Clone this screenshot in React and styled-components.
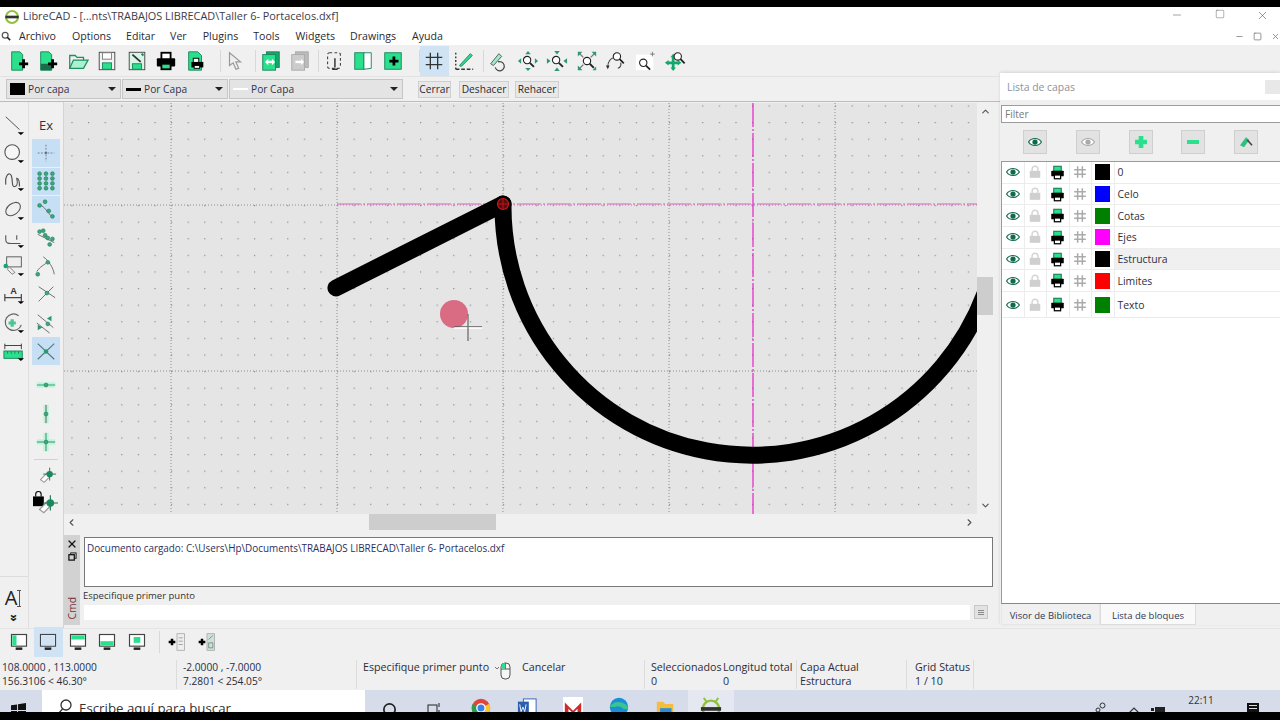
import React from "react";
import styled, { createGlobalStyle } from "styled-components";
import { ChevronLeft, ChevronRight, ChevronUp, ChevronDown, Minus, Square, X } from "lucide-react";

const G = "#2be08c";
const GD = "#17845a";

const Global = createGlobalStyle`
  html, body { margin: 0; padding: 0; background: #f0f0f0; }
  body { font-family: "Open Sans", "Noto Sans", "Liberation Sans", sans-serif; color: #2a2a33; overflow: hidden; }
  * { box-sizing: border-box; }
`;

const Page = styled.div`
  width: 1280px;
  height: 720px;
  display: flex;
  flex-direction: column;
  overflow: hidden;
  background: #f0f0f0;
`;
const BlackBar = styled.div`
  height: ${({ $h }) => $h}px;
  flex: none;
  background: #000;
  position: relative;
  z-index: 2;
`;
const TitleBar = styled.div`
  height: 20px;
  flex: none;
  background: #fff;
  display: flex;
  align-items: center;
  padding-left: 4px;
  gap: 3px;
  font-size: 10.9px;
  color: #3c3c48;
  overflow: hidden;
`;
const TitleText = styled.span`
  margin-top: -4px;
  flex: 1;
`;
const WinButtons = styled.div`
  display: flex;
  margin: -4px -3.5px 0 0;
  color: #444;
`;
const WinButton = styled.div`
  width: 42.5px;
  display: flex;
  justify-content: center;
`;
const MenuBar = styled.div`
  height: 18px;
  flex: none;
  background: #fff;
  display: flex;
  align-items: center;
  font-size: 10.6px;
  padding-left: 1px;
`;
const MenuIcon = styled.span`
  width: 18px;
  display: flex;
`;
const MenuItem = styled.span`
  margin-right: ${({ $gap }) => $gap}px;
`;
const MdiButtons = styled.div`
  margin-left: auto;
  display: flex;
  gap: 9px;
  color: #777;
`;
const Workspace = styled.div`
  height: 583px;
  flex: none;
  display: flex;
`;
const MainCol = styled.div`
  width: 1000px;
  flex: none;
  display: flex;
  flex-direction: column;
`;
const Toolbar = styled.div`
  height: 32px;
  flex: none;
  display: flex;
  align-items: center;
  padding-left: 4px;
  border-bottom: 1px solid #e2e2e2;
  position: relative;
`;
const ToolButton = styled.div`
  width: 29.5px;
  height: 30px;
  flex: none;
  display: flex;
  align-items: center;
  justify-content: center;
  background: ${({ $active }) => ($active ? "#cfe3f5" : "transparent")};
`;
const ToolGap = styled.div`
  width: ${({ $w }) => $w}px;
  flex: none;
  height: 22px;
  border-right: ${({ $line }) => ($line ? "1px solid #d8d8d8" : "none")};
`;
const ComboRow = styled.div`
  height: 25px;
  flex: none;
  display: flex;
  align-items: center;
  padding-left: 6px;
  font-size: 10.2px;
  border-bottom: 1px solid #bcbcbc;
`;
const Combo = styled.div`
  width: ${({ $w }) => $w}px;
  height: 20px;
  flex: none;
  display: flex;
  align-items: center;
  gap: 3px;
  padding: 0 4px 0 3px;
  background: #e4e4e4;
  border: 1px solid #c6c6c6;
  margin-right: 1px;
`;
const Swatch = styled.span`
  width: 15px;
  height: ${({ $h }) => $h}px;
  flex: none;
  background: ${({ $c }) => $c};
`;
const ComboLabel = styled.span`
  flex: 1;
  color: #33334a;
`;
const DropArrow = styled.span`
  width: 0;
  height: 0;
  border-left: 4px solid transparent;
  border-right: 4px solid transparent;
  border-top: 4px solid #222;
`;
const PlainButton = styled.div`
  height: 17px;
  flex: none;
  width: ${({ $w }) => $w}px;
  margin-left: ${({ $ml }) => $ml}px;
  background: #e8e8e8;
  border: 1px solid #cfcfcf;
  display: flex;
  align-items: center;
  justify-content: center;
`;
const MidRow = styled.div`
  flex: 1;
  display: flex;
  min-height: 0;
`;
const LeftTools = styled.div`
  width: 64px;
  flex: none;
  display: flex;
  border-right: 1px solid #d4d4d4;
`;
const ToolColA = styled.div`
  width: 29px;
  flex: none;
  display: flex;
  flex-direction: column;
  align-items: center;
  padding-top: 9px;
  border-right: 1px solid #e0e0e0;
`;
const ToolColB = styled.div`
  flex: 1;
  display: flex;
  flex-direction: column;
  align-items: center;
  padding-top: 9px;
`;
const SideCell = styled.div`
  width: 28px;
  height: 27.3px;
  margin-bottom: 1px;
  flex: none;
  display: flex;
  align-items: center;
  justify-content: center;
  background: ${({ $active }) => ($active ? "#c6dff5" : "transparent")};
  font-size: 13px;
  color: #333;
`;
const SideRule = styled.div`
  width: 24px;
  height: 1px;
  background: #d2d2d2;
  margin: 2px 0;
`;
const SideSpace = styled.div`
  height: ${({ $h }) => $h}px;
  flex: none;
`;
const TextTool = styled.div`
  margin-top: auto;
  width: 100%;
  border-top: 1px solid #dcdcdc;
  height: 52px;
  display: flex;
  flex-direction: column;
  align-items: center;
  padding-top: 10px;
  color: #222;
`;
const TextGlyph = styled.div`
  display: flex;
  align-items: center;
  gap: 0;
  font-size: 20px;
  line-height: 22px;
  margin-right: 2px;
`;
const TextCaret = styled.span`
  width: 4px;
  height: 17px;
  border-top: 1px solid #555;
  border-bottom: 1px solid #555;
  background: linear-gradient(#555, #555) center / 1px 100% no-repeat;
`;
const MoreMark = styled.span`
  font-size: 12px;
  font-weight: 700;
  line-height: 12px;
  margin-top: 3px;
  transform: rotate(90deg);
`;
const CanvasCol = styled.div`
  flex: 1;
  display: flex;
  flex-direction: column;
  padding-right: 7px;
`;
const CanvasFrame = styled.div`
  display: grid;
  grid-template-columns: 913px 16px;
  grid-template-rows: 411px 16px;
  margin-top: 1px;
`;
const Drawing = styled.svg`
  display: block;
  background: #e5e5e6;
`;
const ScrollV = styled.div`
  background: #f0f0f0;
  display: flex;
  flex-direction: column;
  align-items: center;
  justify-content: space-between;
  padding: 3px 0;
  position: relative;
  color: #555;
`;
const ScrollH = styled.div`
  background: #f0f0f0;
  display: flex;
  align-items: center;
  justify-content: space-between;
  padding: 0 2px;
  position: relative;
  color: #555;
`;
const Thumb = styled.div`
  position: absolute;
  background: #cdcdcd;
  ${({ $v }) => ($v ? "left: 0; width: 16px; top: 174px; height: 38px;" : "top: 0; height: 16px; left: 305px; width: 127px;")}
`;
const Corner = styled.div`
  background: #f0f0f0;
`;
const CmdPanel = styled.div`
  height: 90px;
  margin-top: 5px;
  flex: none;
  display: flex;
`;
const CmdStrip = styled.div`
  width: 16px;
  flex: none;
  background: #d2d2d2;
  display: flex;
  flex-direction: column;
  align-items: center;
  padding-top: 3px;
  gap: 2px;
  color: #111;
`;
const CmdLabel = styled.span`
  margin-top: auto;
  padding-top: 5px;
  writing-mode: vertical-rl;
  transform: rotate(180deg);
  font-size: 10.4px;
  color: #7c3038;
`;
const CmdBody = styled.div`
  flex: 1;
  display: flex;
  flex-direction: column;
  padding: 2px 0 0 4px;
`;
const Output = styled.div`
  height: 50px;
  flex: none;
  background: #fff;
  border: 1px solid #777;
  padding: 3px 2px;
  font-size: 9.9px;
  line-height: 14px;
  color: #2c2f5a;
`;
const CmdPrompt = styled.div`
  height: 16px;
  font-size: 9.5px;
  margin: 0 0 2px -1px;
  display: flex;
  align-items: center;
  color: #333;
`;
const CmdInputRow = styled.div`
  display: flex;
  gap: 4px;
  align-items: flex-start;
`;
const CmdInput = styled.div`
  width: 886px;
  height: 15px;
  background: #fff;
`;
const CmdHistory = styled.div`
  width: 14px;
  height: 14px;
  background: #e2e2e2;
  border: 1px solid #c8c8c8;
  display: flex;
  flex-direction: column;
  justify-content: center;
  gap: 1px;
  padding: 0 3px;
`;
const CmdHistoryBar = styled.span`
  height: 1px;
  background: #8a8a8a;
`;
const DockCol = styled.div`
  flex: 1;
  padding-top: 28px;
  min-width: 0;
`;
const Dock = styled.div`
  height: 552px;
  display: flex;
  flex-direction: column;
  box-shadow: 0 -1px 3px rgba(0, 0, 0, 0.12);
`;
const DockHeader = styled.div`
  height: 27px;
  flex: none;
  background: #fff;
  display: flex;
  align-items: center;
  justify-content: space-between;
  padding-left: 7px;
  font-size: 10.4px;
  color: #8b939b;
`;
const DockClose = styled.div`
  width: 15px;
  height: 14px;
  background: #e8e8e8;
`;
const FilterBox = styled.div`
  height: 18px;
  flex: none;
  margin: 5px 0 0 1px;
  background: #fff;
  border: 1px solid #9c9c9c;
  border-right: none;
  padding-left: 3px;
  font-size: 10px;
  line-height: 16px;
  color: #777;
`;
const LayerTools = styled.div`
  height: 24px;
  flex: none;
  margin-top: 7px;
  padding-left: 23px;
  display: flex;
  gap: 28.8px;
`;
const LayerTool = styled.div`
  width: 24px;
  height: 24px;
  background: #e2e2e2;
  border: 1px solid #cfcfcf;
  display: flex;
  align-items: center;
  justify-content: center;
`;
const LayerTable = styled.div`
  flex: 1;
  margin: 7px 0 0 1px;
  background: #fff;
  border: 1px solid #9a9a9a;
  border-right: none;
  border-bottom-color: #888;
`;
const LayerRow = styled.div`
  display: grid;
  grid-template-columns: repeat(5, 22.5px) 1fr;
  height: ${({ $tall }) => ($tall ? 26 : 21.7)}px;
  border-bottom: 1px solid #ececec;
`;
const LayerCell = styled.div`
  display: flex;
  align-items: center;
  justify-content: center;
  border-right: 1px solid #ececec;
`;
const LayerName = styled.div`
  display: flex;
  align-items: center;
  padding-left: 3px;
  font-size: 10.4px;
  color: #2e3040;
  background: ${({ $selected }) => ($selected ? "#f0f0f0" : "transparent")};
`;
const LayerColor = styled.span`
  width: 15px;
  height: 16px;
  background: ${({ $c }) => $c};
`;
const DockTabs = styled.div`
  height: 21px;
  flex: none;
  display: flex;
  padding-left: 1px;
  font-size: 9.5px;
`;
const DockTab = styled.div`
  height: 21px;
  width: ${({ $w }) => $w}px;
  display: flex;
  align-items: center;
  justify-content: center;
  padding-top: 2px;
  color: #2e3a55;
  background: ${({ $active }) => ($active ? "#f9f9f9" : "#f0f0f0")};
  border: 1px solid ${({ $active }) => ($active ? "#dcdcdc" : "#e6e6e6")};
  border-top: none;
`;
const BottomBar = styled.div`
  height: 27px;
  flex: none;
  display: flex;
  align-items: center;
  padding-left: 4px;
  border-top: 1px solid #e4e4e4;
`;
const StatusBar = styled.div`
  height: 35px;
  flex: none;
  display: flex;
  align-items: center;
  font-size: 10.7px;
  line-height: 14px;
  color: #2c2c38;
`;
const StatusCell = styled.div`
  width: ${({ $w }) => $w}px;
  flex: none;
  height: 29px;
  margin-top: 3px;
  padding-left: ${({ $pl }) => $pl}px;
  border-right: ${({ $line }) => ($line ? "1px solid #dcdcdc" : "none")};
  white-space: nowrap;
`;
const CoordCell = styled(StatusCell)`
  font-size: 10.2px;
`;
const PromptCell = styled(StatusCell)`
  display: flex;
  align-items: flex-start;
`;
const CancelText = styled.span`
  margin-left: 5px;
`;
const StatusValue = styled.div`
  color: #24304e;
`;
const Taskbar = styled.div`
  height: 22px;
  flex: none;
  background: #d7dcea;
  display: flex;
  overflow: hidden;
  position: relative;
`;
const StartCell = styled.div`
  width: 42px;
  flex: none;
  padding: 11px 0 0 11px;
`;
const SearchBox = styled.div`
  width: 323px;
  height: 30px;
  flex: none;
  background: #fff;
  display: flex;
  align-items: flex-start;
  padding: 9px 0 0 15px;
  gap: 6px;
  font-size: 13.3px;
  color: #333;
`;
const TrayIcon = styled.div`
  width: ${({ $w }) => $w || 46}px;
  flex: none;
  display: flex;
  justify-content: center;
  padding-top: ${({ $pt }) => $pt || 8}px;
  background: ${({ $active }) => ($active ? "#e6e8f1" : "transparent")};
`;
const TrayRight = styled.div`
  margin-left: auto;
  display: flex;
  align-items: flex-start;
  padding-right: 15px;
`;
const Clock = styled.div`
  width: 50px;
  margin-right: 15px;
  text-align: center;
  font-size: 10px;
  padding-top: 3px;
  color: #333;
`;
const SmallTray = styled.div`
  width: ${({ $w }) => $w}px;
  display: flex;
  justify-content: center;
  padding-top: ${({ $pt }) => $pt || 12}px;
`;

const Ic = ({ s = 22, children }) => (
  <svg width={s} height={s} viewBox="0 0 24 24" fill="none">
    {children}
  </svg>
);

const Plus = ({ x = 17, y = 15, r = 5 }) => (
  <path d={`M${x - r} ${y}H${x + r}M${x} ${y - r}V${y + r}`} stroke="#000" strokeWidth="3" />
);
const Lens = ({ x = 13, y = 11, r = 4 }) => (
  <g stroke="#222" strokeWidth="1.2">
    <circle cx={x} cy={y} r={r} fill="#fff" />
    <path d={`M${x + r - 1} ${y + r - 1}l4.5 4.5`} strokeWidth="2" />
  </g>
);
const Tri = ({ d }) => <path d={d} fill="#2a9a6c" />;

const icons = {
  newDoc: (
    <Ic>
      <path d="M4 2h9l3 3v17H4z" fill={G} stroke={GD} />
      <Plus />
    </Ic>
  ),
  newTpl: (
    <Ic>
      <path d="M4 2h9l3 3v17H4z" fill={G} stroke={GD} />
      <rect x="4" y="15" width="12" height="7" fill="#1a6b48" />
      <Plus />
    </Ic>
  ),
  open: (
    <Ic>
      <path d="M3 20V6h6l2 2h7v3" stroke="#1f8e62" strokeWidth="1.4" />
      <path d="M3 20l4-9h16l-5 9z" fill="#a9f1cf" stroke="#1f8e62" strokeWidth="1.4" />
    </Ic>
  ),
  save: (
    <Ic>
      <rect x="3.5" y="2.5" width="17" height="19" fill="#f4f4f4" stroke="#444" />
      <rect x="7" y="3" width="10" height="7" fill="#fff" stroke="#777" />
      <rect x="7" y="14" width="10" height="7" fill={G} stroke={GD} />
    </Ic>
  ),
  saveAs: (
    <Ic>
      <rect x="3.5" y="2.5" width="17" height="19" fill="#d8f5e6" stroke="#444" />
      <rect x="7" y="15" width="10" height="6" fill={G} stroke={GD} />
      <path d="M7 5l9 8" stroke="#333" strokeWidth="2" />
      <path d="M17 4l2 2" stroke={GD} strokeWidth="2" />
    </Ic>
  ),
  print: (
    <Ic>
      <rect x="7" y="3" width="10" height="8" fill="#fff" stroke="#000" strokeWidth="2" />
      <rect x="2" y="9" width="20" height="9" rx="1" fill="#000" />
      <rect x="7" y="15" width="10" height="6" fill={G} stroke="#000" strokeWidth="2" />
    </Ic>
  ),
  preview: (
    <Ic>
      <path d="M4 2h10l4 4v16H4z" fill={G} stroke={GD} />
      <rect x="9" y="9" width="6" height="5" fill="#fff" stroke="#000" />
      <rect x="7" y="13" width="13" height="6" fill="#000" />
      <rect x="10" y="17" width="6" height="3" fill="#fff" stroke="#000" />
    </Ic>
  ),
  cursor: (
    <Ic>
      <path d="M6 3l12 10h-5l3 7-3 1-3-7-4 3z" fill="#eee" stroke="#999" strokeWidth="1.3" />
    </Ic>
  ),
  swap: (
    <Ic>
      <rect x="7" y="2" width="14" height="17" fill="#14a86c" stroke={GD} />
      <rect x="3" y="5" width="14" height="17" fill={G} stroke={GD} />
      <path d="M7 13h8" stroke="#fff" strokeWidth="2.6" />
      <path d="M9 9.5L5.5 13 9 16.5zM13 9.5l3.5 3.5-3.5 3.5z" fill="#fff" />
    </Ic>
  ),
  swapOff: (
    <Ic>
      <rect x="7" y="2" width="14" height="17" fill="#bbb" stroke="#aaa" />
      <rect x="3" y="5" width="14" height="17" fill="#ccc" stroke="#aaa" />
      <path d="M7 13h8" stroke="#fff" strokeWidth="2.6" />
      <path d="M13 9.5l3.5 3.5-3.5 3.5z" fill="#fff" />
    </Ic>
  ),
  dashed: (
    <Ic>
      <rect x="5" y="3" width="14" height="17" rx="2" stroke="#444" strokeWidth="1.2" strokeDasharray="3 2.5" />
      <path d="M13 9v10M10 21h6" stroke="#333" strokeWidth="1.6" />
    </Ic>
  ),
  panes: (
    <Ic>
      <rect x="3" y="3" width="10" height="18" fill={G} stroke={GD} />
      <path d="M13 3h8v17l-8 1z" fill="#fff" stroke={GD} />
    </Ic>
  ),
  panesAdd: (
    <Ic>
      <rect x="3" y="3" width="18" height="18" fill={G} stroke={GD} />
      <Plus x={13} y={12} r={5} />
    </Ic>
  ),
  grid: (
    <Ic>
      <path d="M8 3v18M16 3v18M3 8h18M3 16h18" stroke="#333" strokeWidth="1.4" />
    </Ic>
  ),
  draft: (
    <Ic>
      <path d="M3 3v18" stroke="#333" strokeDasharray="2 2" strokeWidth="1.5" />
      <path d="M3 21h19" stroke="#333" strokeDasharray="4 2" strokeWidth="1.5" />
      <path d="M7 17L19 4l2 2L9 18z" fill={G} stroke={GD} />
    </Ic>
  ),
  redraw: (
    <Ic>
      <path d="M4 15L13 4l3 3-9 10z" fill="#9fe9c6" stroke="#555" />
      <path d="M12 13a5 5 0 1 1-3 6" stroke="#444" strokeWidth="1.3" />
    </Ic>
  ),
  zoomIn: (
    <Ic>
      <Tri d="M12 1l3 3.5H9zM12 23l-3-3.5h6zM1 12l3.5-3v6zM23 12l-3.5 3v-6z" />
      <Lens x={11} y={11} />
    </Ic>
  ),
  zoomOut: (
    <Ic>
      <Tri d="M12 5L9 1h6zM12 19l3 4H9zM5 12l-4 3V9zM19 12l4-3v6z" />
      <Lens x={11} y={11} />
    </Ic>
  ),
  zoomAuto: (
    <Ic>
      <path d="M3 3l5 5M21 3l-5 5M3 21l5-5" stroke="#777" strokeWidth="1.4" />
      <path d="M2 2h5L2 7zM22 2h-5l5 5zM2 22h5l-5-5zM22 22h-4l4-4z" fill="#2a9a6c" />
      <Lens x={12} y={12} />
    </Ic>
  ),
  zoomPrev: (
    <Ic>
      <path d="M3 19c0-6 3-10 8-11" stroke="#444" strokeWidth="1.2" />
      <path d="M1 17l2 4 2-4z" fill="#333" />
      <path d="M14 20c3-1 4-4 3-6" stroke="#444" strokeWidth="1.2" />
      <Lens x={13} y={7} />
    </Ic>
  ),
  zoomWin: (
    <Ic>
      <rect x="1" y="5" width="19" height="17" fill="#fff" />
      <Lens x={9} y={14} />
      <path d="M19 2v5M16.5 4.5h5" stroke="#777" />
    </Ic>
  ),
  zoomPan: (
    <Ic>
      <path d="M10 4l3 4H7zM10 23l-3-4h6zM1 14l4-3v6zM19 14l-4 3v-6z" fill="#14a86c" />
      <path d="M10 7v13M4 14h12" stroke="#14a86c" strokeWidth="3" />
      <Lens x={15} y={7} />
    </Ic>
  ),
};

const topTools = [
  ["newDoc"], ["newTpl"], ["open"], ["save"], ["saveAs"], ["print"], ["preview"],
  [null, 10], ["cursor"], [null, 6], ["swap"], ["swapOff"], [null, 4], ["dashed"], ["panes"], ["panesAdd"],
  [null, 12], ["grid", 0, true], ["draft"], [null, 5], ["redraw"], ["zoomIn"], ["zoomOut"], ["zoomAuto"], ["zoomPrev"], ["zoomWin"], ["zoomPan"],
];

const More = () => <path d="M16 20h7l-3.5 3z" fill="#000" />;
const sideA = [
  <Ic key="a"><path d="M3 3l15 14" stroke="#444" /><More /></Ic>,
  <Ic key="b"><circle cx="10" cy="11" r="8" stroke="#555" strokeWidth="1.2" fill="#f6f6f6" /><More /></Ic>,
  <Ic key="c"><path d="M3 16C2 5 7 2 9 6c2 5 0 13 4 12 4-1 2-9 2-9 2 0 3 3 3 9" stroke="#555" strokeWidth="1.3" /><More /></Ic>,
  <Ic key="d"><ellipse cx="11" cy="11" rx="9" ry="6" transform="rotate(-38 11 11)" stroke="#555" strokeWidth="1.2" /><More /></Ic>,
  <Ic key="e"><path d="M3 9v5c0 4 3 4 6 4h10M15 9v5" stroke="#555" strokeWidth="1.2" /><More /></Ic>,
  <Ic key="f"><rect x="4" y="2" width="16" height="11" fill="#eee" stroke="#555" /><circle cx="3" cy="12" r="2.5" fill="#14a86c" /><path d="M6 12l7 7-3 2-5-5z" fill="#eee" stroke="#777" /><More /></Ic>,
  <Ic key="g"><path d="M2 12v8M20 12v8M2 16h18" stroke="#444" strokeWidth="1.3" /><text x="8" y="12" fontSize="10" fontWeight="700" fill="#333" fontFamily="Liberation Sans">A</text><More /></Ic>,
  <Ic key="h"><path d="M17 4a9 9 0 1 0 3 10" stroke="#666" strokeWidth="1.3" /><path d="M10 8v8M6 12h8" stroke="#4cc595" strokeWidth="3.5" /><More /></Ic>,
  <Ic key="i"><path d="M2 4v6M20 4v6M2 6h18" stroke="#333" /><rect x="1" y="12" width="20" height="8" fill={G} stroke={GD} /><path d="M5 12v3M9 12v3M13 12v3M17 12v3" stroke={GD} /><More /></Ic>,
];

const Node = ({ x, y, r = 2.1 }) => <circle cx={x} cy={y} r={r} fill="#3ca67c" stroke="#1b7a56" strokeWidth=".6" />;
const Snap = ({ lines, nodes }) => (
  <Ic>
    {lines && <path d={lines} stroke="#666" strokeWidth="1" />}
    {nodes.map(([x, y], i) => <Node key={i} x={x} y={y} />)}
  </Ic>
);
const matrix = [];
for (let a = 5; a <= 19; a += 7) for (let b = 4; b <= 20; b += 5.3) matrix.push([a, b]);

const EraseSnap = ({ lock }) => (
  <Ic s={lock ? 26 : 22}>
    {lock && <rect x="0" y="5" width="10" height="9" fill="#000" />}
    {lock && <path d="M2.5 5V3a2.5 2.5 0 0 1 5 0v2" stroke="#000" />}
    <path d="M6 17l7-7 4 3-7 7z" fill="#fff" stroke="#999" strokeWidth="1.2" />
    <path d="M16 4v14M9 11h14" stroke="#14704c" strokeWidth="1" />
    <circle cx="16" cy="11" r="3.5" fill="#1a8a5e" />
  </Ic>
);

const sideB = [
  { text: "Ex" },
  { active: true, el: <Ic><path d="M12 3v18M3 12h18" stroke="#6a7a88" strokeDasharray="2 1.5" /><circle cx="12" cy="12" r="1" fill="#555" /></Ic> },
  { active: true, el: <Snap nodes={matrix} /> },
  { active: true, el: <Snap lines="M5 7C11 7 13 16 19 19" nodes={[[5, 7], [11, 3], [15, 13], [19, 19]]} /> },
  { el: <Snap lines="M3 8l18 9" nodes={[[5, 5], [9, 4], [11, 9], [14, 12], [19, 13], [16, 19]]} /> },
  { el: <Snap lines="M2 18C6 12 10 11 12 9M9 2C15 6 20 14 21 21" nodes={[[14, 8], [3, 21]]} /> },
  { el: <Snap lines="M4 4l18 12M4 20L20 4" nodes={[[13, 11]]} /> },
  { el: <Ic><path d="M3 3l17 14M2 12l14 11" stroke="#666" strokeWidth="1" /><Tri d="M18 4l-5 3 5 3zM3 14l5 3-5 3z" /><Node x={14} y={13} /></Ic> },
  { active: true, el: <Ic><path d="M3 4l18 17M21 4L3 21" stroke="#4e7c78" strokeWidth="1.2" /><circle cx="12" cy="12.5" r="2.5" fill="#2a9a6c" /></Ic> },
];

const Eye = ({ c = "#0f6b4a" }) => (
  <Ic s={14}>
    <path d="M1 12c5-8 17-8 22 0-5 8-17 8-22 0z" fill="#fff" stroke={c} strokeWidth="2" />
    <circle cx="12" cy="12" r="4.5" fill={c} />
  </Ic>
);
const Lock = () => (
  <Ic s={14}>
    <rect x="3" y="10" width="18" height="12" fill="#cfcfcf" />
    <path d="M7 11V7a5 5 0 0 1 10 0v4" stroke="#d5d5d5" strokeWidth="2.6" />
  </Ic>
);
const Printer = () => (
  <Ic s={15}>
    <rect x="6" y="2" width="12" height="8" fill={G} stroke="#14704c" strokeWidth="1.6" />
    <rect x="2" y="9" width="20" height="9" rx="1" fill="#000" />
    <rect x="7" y="16" width="10" height="6" fill="#fff" stroke="#000" strokeWidth="2" />
  </Ic>
);
const Hash = () => (
  <Ic s={14}>
    <path d="M8 2v20M16 2v20M2 8h20M2 16h20" stroke="#aaa" strokeWidth="2.6" />
  </Ic>
);

const layers = [
  ["0", "#000"], ["Celo", "#0000ff"], ["Cotas", "#008000"], ["Ejes", "#ff00ff"],
  ["Estructura", "#000", true], ["Limites", "#ff0000"], ["Texto", "#008000", false, true],
];

const Monitor = ({ zone }) => (
  <Ic s={20}>
    <rect x="3" y="3" width="18" height="14" fill="#fff" stroke="#444" strokeWidth="1.4" />
    {zone}
    <path d="M8 20h8" stroke="#222" strokeWidth="3" />
  </Ic>
);
const bottomTools = [
  { el: <Monitor zone={<rect x="4" y="4" width="5" height="12" fill={G} />} /> },
  { el: <Monitor zone={<rect x="4" y="4" width="16" height="12" fill="#cfe3f5" />} />, active: true },
  { el: <Monitor zone={<rect x="4" y="4" width="16" height="5" fill={G} />} /> },
  { el: <Monitor zone={<rect x="4" y="11" width="16" height="5" fill={G} />} /> },
  { el: <Monitor zone={<rect x="8" y="6" width="8" height="7" fill={G} />} /> },
];

const ArcDrawing = () => {
  const xs = [171, 337, 503, 669, 835];
  const ys = [205, 371];
  return (
    <Drawing width="913" height="411" viewBox="64 103 913 411">
      <defs>
        <pattern id="dots" x="171" y="205" width="16.6" height="16.6" patternUnits="userSpaceOnUse">
          <rect width="1.2" height="1.2" fill="#8b8b8b" />
        </pattern>
      </defs>
      <rect x="64" y="103" width="913" height="411" fill="url(#dots)" />
      {xs.map((x) => <path key={x} d={`M${x} 103V514`} stroke="#8f8f8f" strokeDasharray="1 2" />)}
      {ys.map((y) => <path key={y} d={`M64 ${y}H977`} stroke="#8f8f8f" strokeDasharray="1 2" />)}
      <path d="M337 204H977" stroke="#d860c0" strokeWidth="1.2" strokeDasharray="24 2 2 2" />
      <path d="M753 103V514" stroke="#ea1ec8" strokeWidth="1.2" strokeDasharray="24 2 2 2" />
      <g stroke="#000" strokeWidth="17" strokeLinecap="round" fill="none">
        <path d="M336 288L503 204" />
        <path d="M503 204A249 249 0 0 0 985 294" />
      </g>
      <circle cx="503" cy="204" r="5.5" fill="#5a0a12" stroke="#d01818" strokeWidth="1.2" />
      <path d="M497 204h12M503 198v12" stroke="#d01818" strokeWidth=".8" />
      <circle cx="454" cy="314" r="14" fill="#d96b82" />
      <path d="M454 328H482" stroke="#fff" strokeWidth="1.6" />
      <path d="M454 326.6H482" stroke="#555" strokeWidth=".8" />
      <path d="M468 314V341" stroke="#777" strokeWidth="1.4" />
    </Drawing>
  );
};

const App = () => (
  <Page>
    <Global />
    <BlackBar $h={7} />
    <TitleBar>
      <svg width="16" height="16" viewBox="0 0 24 24" fill="none">
        <circle cx="12" cy="12" r="9" stroke="#8fc23a" strokeWidth="3" />
        <path d="M2 12h20" stroke="#333" strokeWidth="4" />
      </svg>
      <TitleText>LibreCAD - [...nts\TRABAJOS LIBRECAD\Taller 6- Portacelos.dxf]</TitleText>
      <WinButtons>
        <WinButton><Minus size={12} strokeWidth={1} /></WinButton>
        <WinButton><Square size={10} strokeWidth={1} /></WinButton>
        <WinButton><X size={13} strokeWidth={1} /></WinButton>
      </WinButtons>
    </TitleBar>
    <MenuBar>
      <MenuIcon>
        <svg width="10" height="10" viewBox="0 0 24 24" fill="none">
          <circle cx="10" cy="10" r="7" stroke="#555" strokeWidth="3" />
          <path d="M15 15l7 7" stroke="#222" strokeWidth="4" />
        </svg>
      </MenuIcon>
      <MenuItem $gap={16}>Archivo</MenuItem>
      <MenuItem $gap={15}>Options</MenuItem>
      <MenuItem $gap={15}>Editar</MenuItem>
      <MenuItem $gap={16}>Ver</MenuItem>
      <MenuItem $gap={15}>Plugins</MenuItem>
      <MenuItem $gap={16}>Tools</MenuItem>
      <MenuItem $gap={15}>Widgets</MenuItem>
      <MenuItem $gap={16}>Drawings</MenuItem>
      <MenuItem $gap={0}>Ayuda</MenuItem>
      <MdiButtons>
        <Minus size={9} />
        <Square size={9} />
        <X size={9} />
      </MdiButtons>
    </MenuBar>
    <Workspace>
      <MainCol>
        <Toolbar>
          {topTools.map(([name, w, active], i) =>
            name ? (
              <ToolButton key={i} $active={active}>{icons[name]}</ToolButton>
            ) : (
              <ToolGap key={i} $w={w} $line />
            )
          )}
        </Toolbar>
        <ComboRow>
          <Combo $w={115}>
            <Swatch $c="#000" $h={12} />
            <ComboLabel>Por capa</ComboLabel>
            <DropArrow />
          </Combo>
          <Combo $w={106}>
            <Swatch $c="#000" $h={3} />
            <ComboLabel>Por Capa</ComboLabel>
            <DropArrow />
          </Combo>
          <Combo $w={174}>
            <Swatch $c="#fff" $h={2} />
            <ComboLabel>Por Capa</ComboLabel>
            <DropArrow />
          </Combo>
          <PlainButton $w={33} $ml={14}>Cerrar</PlainButton>
          <PlainButton $w={50} $ml={8}>Deshacer</PlainButton>
          <PlainButton $w={44} $ml={6}>Rehacer</PlainButton>
        </ComboRow>
        <MidRow>
          <LeftTools>
            <ToolColA>
              {sideA.map((el, i) => <SideCell key={i}>{el}</SideCell>)}
              <TextTool>
                <TextGlyph>
                  A
                  <TextCaret />
                </TextGlyph>
                <MoreMark>»</MoreMark>
              </TextTool>
            </ToolColA>
            <ToolColB>
              {sideB.map((b, i) => (
                <SideCell key={i} $active={b.active}>{b.text || b.el}</SideCell>
              ))}
              <SideSpace $h={6} />
              <SideCell><Ic><rect x="2" y="9" width="20" height="6" fill="#bdf5da" /><path d="M2 12h20" stroke="#2a9a6c" /><Node x={12} y={12} /></Ic></SideCell>
              <SideCell><Ic><rect x="9" y="2" width="6" height="20" fill="#bdf5da" /><path d="M12 2v20" stroke="#555" /><Node x={12} y={12} /></Ic></SideCell>
              <SideCell><Ic><rect x="2" y="9" width="20" height="6" fill="#bdf5da" /><rect x="9" y="2" width="6" height="20" fill="#bdf5da" /><path d="M2 12h20M12 2v20" stroke="#2a8a60" /><Node x={12} y={12} /></Ic></SideCell>
              <SideRule />
              <SideCell><EraseSnap /></SideCell>
              <SideCell><EraseSnap lock /></SideCell>
            </ToolColB>
          </LeftTools>
          <CanvasCol>
            <CanvasFrame>
              <ArcDrawing />
              <ScrollV>
                <ChevronUp size={11} strokeWidth={2.5} />
                <Thumb $v />
                <ChevronDown size={11} strokeWidth={2.5} />
              </ScrollV>
              <ScrollH>
                <ChevronLeft size={11} strokeWidth={2.5} />
                <Thumb />
                <ChevronRight size={11} strokeWidth={2.5} />
              </ScrollH>
              <Corner />
            </CanvasFrame>
            <CmdPanel>
              <CmdStrip>
                <X size={12} strokeWidth={2.4} />
                <svg width="9" height="9" viewBox="0 0 10 10" fill="none" stroke="#111">
                  <rect x="3" y="1" width="6" height="6" />
                  <rect x="1" y="3" width="6" height="6" fill="#d2d2d2" strokeWidth="1.4" />
                </svg>
                <CmdLabel>Cmd</CmdLabel>
              </CmdStrip>
              <CmdBody>
                <Output>Documento cargado: C:\Users\Hp\Documents\TRABAJOS LIBRECAD\Taller 6- Portacelos.dxf</Output>
                <CmdPrompt>Especifique primer punto</CmdPrompt>
                <CmdInputRow>
                  <CmdInput />
                  <CmdHistory>
                    <CmdHistoryBar />
                    <CmdHistoryBar />
                    <CmdHistoryBar />
                  </CmdHistory>
                </CmdInputRow>
              </CmdBody>
            </CmdPanel>
          </CanvasCol>
        </MidRow>
      </MainCol>
      <DockCol>
        <Dock>
          <DockHeader>
            Lista de capas
            <DockClose />
          </DockHeader>
          <FilterBox>Filter</FilterBox>
          <LayerTools>
            <LayerTool><Eye /></LayerTool>
            <LayerTool><Eye c="#aaa" /></LayerTool>
            <LayerTool>
              <Ic s={16}><path d="M12 3v18M3 12h18" stroke={G} strokeWidth="7" /></Ic>
            </LayerTool>
            <LayerTool>
              <Ic s={16}><path d="M3 12h18" stroke={G} strokeWidth="6" /></Ic>
            </LayerTool>
            <LayerTool>
              <Ic s={16}><path d="M3 17L12 5l5 4-8 11z" fill="#2fbf80" /><path d="M14 9l7 8" stroke="#444" strokeWidth="2.4" /></Ic>
            </LayerTool>
          </LayerTools>
          <LayerTable>
            {layers.map(([name, color, selected, tall]) => (
              <LayerRow key={name} $tall={tall}>
                <LayerCell><Eye /></LayerCell>
                <LayerCell><Lock /></LayerCell>
                <LayerCell><Printer /></LayerCell>
                <LayerCell><Hash /></LayerCell>
                <LayerCell><LayerColor $c={color} /></LayerCell>
                <LayerName $selected={selected}>{name}</LayerName>
              </LayerRow>
            ))}
          </LayerTable>
          <DockTabs>
            <DockTab $w={99}>Visor de Biblioteca</DockTab>
            <DockTab $w={96} $active>Lista de bloques</DockTab>
          </DockTabs>
        </Dock>
      </DockCol>
    </Workspace>
    <BottomBar>
      {bottomTools.map((t, i) => (
        <ToolButton key={i} $active={t.active}>{t.el}</ToolButton>
      ))}
      <ToolGap $w={8} $line />
      <ToolGap $w={3} />
      <ToolButton>
        <Ic s={20}><rect x="12" y="2" width="9" height="20" fill="#eee" stroke="#aaa" /><path d="M14 7h5M14 11h5M14 15h5" stroke="#999" /><Plus x={6} y={12} r={4} /></Ic>
      </ToolButton>
      <ToolButton>
        <Ic s={20}><rect x="12" y="2" width="9" height="20" fill="#cfe0d8" stroke="#aaa" /><path d="M14 9l5-5M14 13h5v6h-5z" stroke="#6a8a7c" /><Plus x={6} y={12} r={4} /></Ic>
      </ToolButton>
    </BottomBar>
    <StatusBar>
      <CoordCell $w={177} $pl={2} $line>
        <StatusValue>108.0000 , 113.0000</StatusValue>
        <div>156.3106 &lt; 46.30°</div>
      </CoordCell>
      <CoordCell $w={180} $pl={6} $line>
        <StatusValue>-2.0000 , -7.0000</StatusValue>
        <div>7.2801 &lt; 254.05°</div>
      </CoordCell>
      <PromptCell $w={288} $pl={6} $line>
        Especifique primer punto
        <svg width="28" height="22" viewBox="0 0 28 22" fill="none" stroke="#555">
          <rect x="12" y="3" width="9" height="16" rx="4" fill="#f6f6f6" />
          <path d="M12 9h9M16.5 3v6" />
          <path d="M12.5 8.5V5a3 3 0 0 1 4-1.5V8.5z" fill={G} stroke="none" />
          <path d="M6 7l2 2 2-2" strokeWidth=".8" />
        </svg>
        <CancelText>Cancelar</CancelText>
      </PromptCell>
      <StatusCell $w={78} $pl={6}>
        Seleccionados
        <StatusValue>0</StatusValue>
      </StatusCell>
      <StatusCell $w={74} $line>
        Longitud total
        <StatusValue>0</StatusValue>
      </StatusCell>
      <StatusCell $w={110} $pl={3} $line>
        Capa Actual
        <StatusValue>Estructura</StatusValue>
      </StatusCell>
      <StatusCell $w={67} $pl={8} $line>
        Grid Status
        <StatusValue>1 / 10</StatusValue>
      </StatusCell>
    </StatusBar>
    <Taskbar>
      <StartCell>
        <svg width="15" height="15" viewBox="0 0 16 16" fill="#111">
          <path d="M0 2.5l6.5-1v6H0zM7.5 1.3L16 0v7.5H7.5zM0 8.5h6.5v6l-6.5-1zM7.5 8.5H16V16l-8.5-1.3z" />
        </svg>
      </StartCell>
      <SearchBox>
        <svg width="16" height="18" viewBox="0 0 16 18" fill="none" stroke="#333" strokeWidth="1.3">
          <circle cx="9" cy="6" r="5" />
          <path d="M5.5 10L1 15" />
        </svg>
        Escribe aquí para buscar
      </SearchBox>
      <TrayIcon $w={48} $pt={12}>
        <svg width="15" height="15" viewBox="0 0 16 16" fill="none"><circle cx="8" cy="8" r="6" stroke="#222" strokeWidth="1.8" /></svg>
      </TrayIcon>
      <TrayIcon $w={42} $pt={12}>
        <svg width="16" height="16" viewBox="0 0 16 16" fill="none" stroke="#222"><rect x="2" y="3" width="9" height="10" /><path d="M13 1v4M13 8v4" /></svg>
      </TrayIcon>
      <TrayIcon $w={3} />
      <TrayIcon>
        <svg width="20" height="20" viewBox="0 0 24 24"><circle cx="12" cy="12" r="11" fill="#e0463a" /><path d="M12 12L22 7a11 11 0 0 1-6 15z" fill="#f8c52c" /><path d="M12 12L2 7a11 11 0 0 0 10 16z" fill="#2f9e4f" /><circle cx="12" cy="12" r="5" fill="#3f7fe8" stroke="#fff" strokeWidth="1.6" /></svg>
      </TrayIcon>
      <TrayIcon>
        <svg width="20" height="20" viewBox="0 0 22 22"><rect x="7" y="1" width="14" height="20" fill="#fff" stroke="#2b5fb0" /><rect x="1" y="4" width="12" height="14" fill="#2b5fb0" /><path d="M3 7l1.5 8 2-5 2 5L10 7" stroke="#fff" fill="none" /></svg>
      </TrayIcon>
      <TrayIcon $pt={7}>
        <svg width="22" height="20" viewBox="0 0 24 22"><rect x="1" y="0" width="22" height="22" fill="#fff" /><path d="M3 6l9 9 9-9v14h-4v-7l-5 5-5-5v7H3z" fill="#cf2a2a" /></svg>
      </TrayIcon>
      <TrayIcon $pt={7}>
        <svg width="20" height="20" viewBox="0 0 24 24"><circle cx="12" cy="12" r="11" fill="#1a8fd8" /><path d="M1 12C5 4 17 4 23 12c0 3-3 3-6 2-2-2-6-4-10-2z" fill="#38c58e" /></svg>
      </TrayIcon>
      <TrayIcon $pt={10}>
        <svg width="20" height="18" viewBox="0 0 24 22"><path d="M2 2h8l2 3h10v17H2z" fill="#f4bd3e" /><rect x="6" y="10" width="14" height="10" fill="#2b8fd8" /></svg>
      </TrayIcon>
      <TrayIcon $active $pt={7}>
        <svg width="24" height="22" viewBox="0 0 26 24" fill="none"><circle cx="13" cy="13" r="9" stroke="#8fc23a" strokeWidth="2.6" /><path d="M2 13h22" stroke="#333" strokeWidth="4" /><path d="M5 1l3 4M21 1l-3 4" stroke="#8fc23a" strokeWidth="2" /></svg>
      </TrayIcon>
      <TrayRight>
        <SmallTray $w={54}>
          <svg width="12" height="12" viewBox="0 0 12 12" fill="none" stroke="#333"><circle cx="7.5" cy="3.5" r="2.5" /><circle cx="3" cy="8" r="2" /></svg>
        </SmallTray>
        <SmallTray $w={12} $pt={16}>
          <svg width="12" height="8" viewBox="0 0 12 8" fill="none" stroke="#333" strokeWidth="1.2"><path d="M1 7l5-5 5 5" /></svg>
        </SmallTray>
        <SmallTray $w={36} $pt={15}>
          <svg width="14" height="10" viewBox="0 0 14 10" fill="#222"><rect x="4" y="2" width="10" height="8" /><path d="M0 3h3v3H0z" /></svg>
        </SmallTray>
        <Clock>22:11</Clock>
        <SmallTray $w={24}>
          <svg width="14" height="14" viewBox="0 0 14 14" fill="#111"><path d="M1 1h12v10H1zM3 3v1h8V3zM3 6v1h8V6z" fillRule="evenodd" /></svg>
        </SmallTray>
      </TrayRight>
    </Taskbar>
    <BlackBar $h={8} />
  </Page>
);

export default App;
